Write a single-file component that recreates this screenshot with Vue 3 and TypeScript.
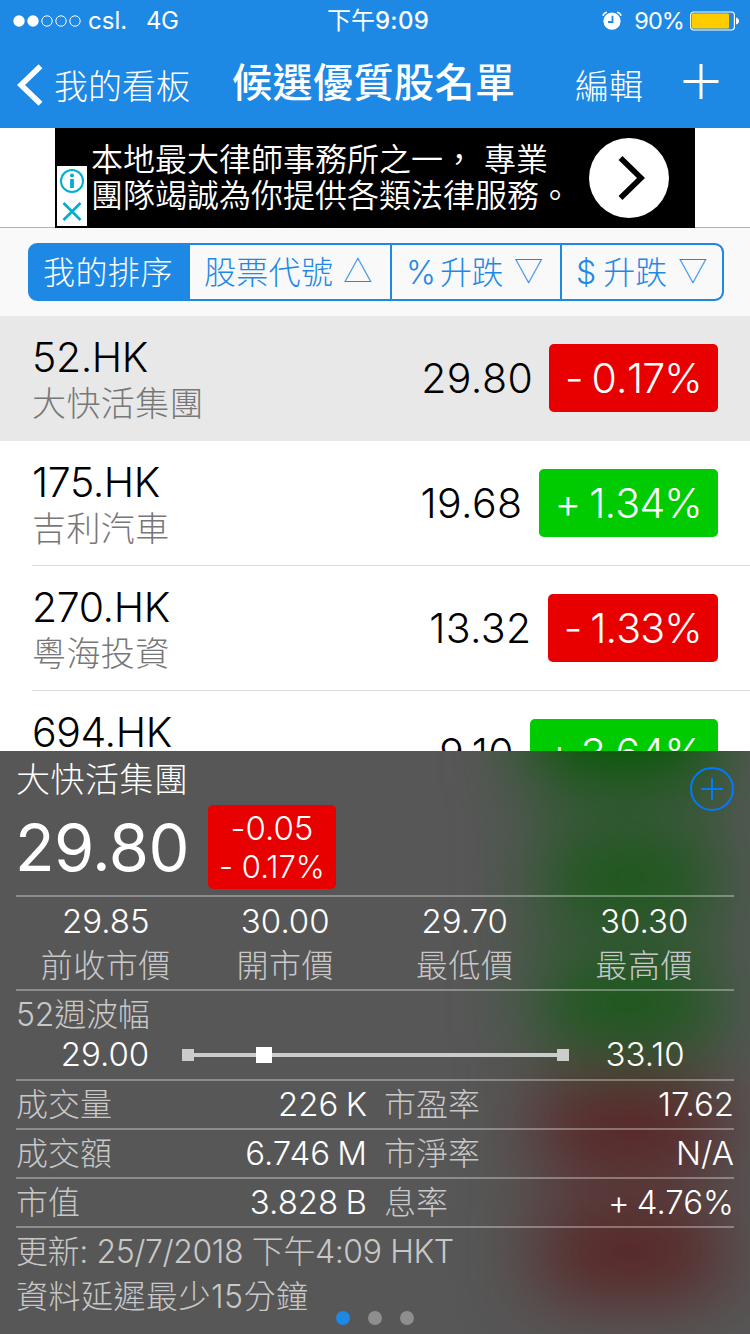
<script setup lang="ts">
interface Quote {
  code: string
  name: string
  price: string
  change: string
  up: boolean
  selected?: boolean
}

interface Pair {
  label: string
  value: string
}

const segments: { text: string; arrow?: string; cls: string }[] = [
  { text: '我的排序', cls: 'seg-a active' },
  { text: '股票代號', arrow: '△', cls: 'seg-b' },
  { text: '% 升跌', arrow: '▽', cls: 'seg-c' },
  { text: '$ 升跌', arrow: '▽', cls: 'seg-d' },
]

const quotes: Quote[] = [
  { code: '52.HK', name: '大快活集團', price: '29.80', change: '- 0.17%', up: false, selected: true },
  { code: '175.HK', name: '吉利汽車', price: '19.68', change: '+ 1.34%', up: true },
  { code: '270.HK', name: '粵海投資', price: '13.32', change: '- 1.33%', up: false },
  { code: '694.HK', name: '', price: '9.10', change: '+ 3.64%', up: true },
]

const stats: Pair[] = [
  { value: '29.85', label: '前收市價' },
  { value: '30.00', label: '開市價' },
  { value: '29.70', label: '最低價' },
  { value: '30.30', label: '最高價' },
]

const details: [Pair, Pair][] = [
  [{ label: '成交量', value: '226 K' }, { label: '市盈率', value: '17.62' }],
  [{ label: '成交額', value: '6.746 M' }, { label: '市淨率', value: 'N/A' }],
  [{ label: '市值', value: '3.828 B' }, { label: '息率', value: '+ 4.76%' }],
]

const range = { low: 29.0, high: 33.1, current: 29.8 }
const rangePct = ((range.current - range.low) / (range.high - range.low)) * 100
</script>

<template>
  <div class="screen">
    <header class="top">
      <div class="status">
        <div class="status-left">
          <svg class="signal" width="68" height="12" viewBox="0 0 68 12">
            <circle cx="6" cy="6" r="5.7" fill="#fff" />
            <circle cx="20" cy="6" r="5.7" fill="#fff" />
            <g fill="none" stroke="#fff" stroke-width="1">
              <circle cx="34" cy="6" r="5.2" />
              <circle cx="48" cy="6" r="5.2" />
              <circle cx="62" cy="6" r="5.2" />
            </g>
          </svg>
          <span class="carrier">csl.</span>
          <span class="network">4G</span>
        </div>
        <div class="clock">下午<b>9:09</b></div>
        <div class="status-right">
          <svg class="alarm" width="20" height="20" viewBox="0 0 20 20">
            <circle cx="10" cy="10.2" r="8.6" fill="#fff" />
            <path d="M1 4.8Q1.5 1.8 5 1.2M19 4.8Q18.5 1.8 15 1.2" fill="none" stroke="#fff" stroke-width="1.6" />
            <path d="M10.5 4.8V11H6" fill="none" stroke="#1e88e5" stroke-width="1.8" />
          </svg>
          <span class="percent">90%</span>
          <svg class="battery" width="50" height="20" viewBox="0 0 50 20">
            <rect x="0.6" y="1" width="43.8" height="18" rx="3" fill="none" stroke="#fff" stroke-width="1.2" />
            <rect x="2" y="2.5" width="37" height="15" rx="1" fill="#ffcc00" />
            <path d="M46 6.5Q49 7.5 49 10T46 13.5Z" fill="#fff" />
          </svg>
        </div>
      </div>
      <nav class="nav">
        <svg class="back" width="26" height="42" viewBox="0 0 26 42">
          <path d="M23.5 2.2L4 21L23.5 39.8" fill="none" stroke="#fff" stroke-width="5.6" />
        </svg>
        <span class="back-label">我的看板</span>
        <h1 class="title">候選優質股名單</h1>
        <span class="edit">編輯</span>
        <svg class="add" width="36" height="36" viewBox="0 0 36 36">
          <path d="M0.5 17.5H35.5M18 0V35" stroke="#fff" stroke-width="3" />
        </svg>
      </nav>
    </header>

    <section class="ad-strip">
      <div class="ad">
        <div class="ad-marks">
          <svg width="30" height="60" viewBox="0 0 30 60" fill="none" stroke="#00aecd">
            <circle cx="15" cy="15" r="11" stroke-width="2" />
            <path d="M15 13V22" stroke-width="3.8" />
            <circle cx="15" cy="9.5" r="2" fill="#00aecd" stroke="none" />
            <path d="M6.5 37L23.5 54M23.5 37L6.5 54" stroke-width="2.6" />
          </svg>
        </div>
        <div class="ad-copy">
          <div>本地最大律師事務所之一， 專業</div>
          <div>團隊竭誠為你提供各類法律服務。</div>
        </div>
        <svg class="ad-go" width="80" height="80" viewBox="0 0 80 80">
          <circle cx="40" cy="40" r="40" fill="#fff" />
          <path d="M31.5 20L52 40L31.5 60" fill="none" stroke="#000" stroke-width="5.6" />
        </svg>
      </div>
    </section>

    <section class="sort-bar">
      <div class="segments">
        <div v-for="s in segments" :key="s.text" class="segment" :class="s.cls">
          <span>{{ s.text }}</span><span v-if="s.arrow" class="arrow">{{ s.arrow }}</span>
        </div>
      </div>
    </section>

    <main class="list">
      <div v-for="q in quotes" :key="q.code" class="row" :class="{ selected: q.selected }">
        <div class="row-inner">
          <div class="ident">
            <div class="code">{{ q.code }}</div>
            <div class="name">{{ q.name }}</div>
          </div>
          <div class="price">{{ q.price }}</div>
          <div class="badge" :class="q.up ? 'up' : 'down'">{{ q.change }}</div>
        </div>
      </div>
    </main>

    <section class="panel">
      <div class="glow">
        <i class="g w1"></i><i class="g w2"></i><i class="g w3"></i>
        <i class="r w2"></i><i class="r w2"></i>
      </div>
      <div class="content">
        <div class="head">
          <div class="head-left">
            <div class="p-name">大快活集團</div>
            <div class="p-quote">
              <div class="p-price">29.80</div>
              <div class="p-badge">
                <div class="diff">-0.05</div>
                <div class="pct">- 0.17%</div>
              </div>
            </div>
          </div>
          <svg class="p-add" width="44" height="44" viewBox="0 0 44 44" fill="none" stroke="#007aff" stroke-width="2">
            <circle cx="22" cy="22" r="21" />
            <path d="M11 22H33M22 11V33" />
          </svg>
        </div>
        <div class="stats">
          <div v-for="s in stats" :key="s.label" class="stat">
            <div class="val">{{ s.value }}</div>
            <div class="lab">{{ s.label }}</div>
          </div>
        </div>
        <div class="range">
          <div class="lab range-title">52週波幅</div>
          <div class="range-row">
            <div class="val range-end">{{ range.low.toFixed(2) }}</div>
            <div class="track">
              <i class="stop"></i>
              <div class="bar"><i class="marker" :style="{ left: rangePct + '%' }"></i></div>
              <i class="stop"></i>
            </div>
            <div class="val range-end">{{ range.high.toFixed(2) }}</div>
          </div>
        </div>
        <div v-for="(d, i) in details" :key="i" class="detail">
          <div v-for="p in d" :key="p.label" class="pair">
            <span class="lab">{{ p.label }}</span>
            <span class="val">{{ p.value }}</span>
          </div>
        </div>
        <div class="foot">
          <div class="updated">更新: 25/7/2018 下午4:09 HKT</div>
          <div class="delay">資料延遲最少15分鐘</div>
        </div>
      </div>
      <div class="dots"><i class="on"></i><i></i><i></i></div>
    </section>
  </div>
</template>

<style>
body {
  background: #fff;
}
</style>

<style scoped>
.screen {
  width: 750px;
  height: 1334px;
  overflow: hidden;
  display: flex;
  flex-direction: column;
  font-family: Inter, 'Noto Sans CJK TC', sans-serif;
  font-weight: 300;
  font-feature-settings: 'calt' 0;
  color: #000;
  background: #fff;
  white-space: nowrap;
}
.screen svg {
  display: block;
  flex: none;
}
.top {
  height: 128px;
  flex: none;
  background: #1e88e5;
  color: #fff;
}
.status {
  height: 41px;
  display: grid;
  grid-template-columns: 1fr auto 1fr;
  align-items: center;
  font-size: 24px;
  line-height: 42px;
  font-weight: 400;
}
.status-left {
  display: flex;
  align-items: center;
  padding-left: 13px;
}
.carrier {
  margin-left: 7px;
}
.network {
  margin-left: 19px;
  letter-spacing: -0.5px;
}
.clock {
  padding-left: 6px;
}
.clock b {
  font-weight: 500;
  letter-spacing: 0.3px;
}
.status-right {
  display: flex;
  align-items: center;
  justify-content: flex-end;
  padding-right: 10px;
}
.percent {
  margin: 0 6px 0 12px;
  font-size: 23.5px;
  letter-spacing: -0.9px;
}
.nav {
  height: 87px;
  display: flex;
  align-items: center;
  padding-left: 17px;
}
.back-label {
  margin-left: 11px;
  width: 178px;
  font-size: 34px;
}
.title {
  margin: 0;
  width: 343px;
  font-size: 40px;
  letter-spacing: 0.5px;
  line-height: 84px;
  height: 87px;
  font-weight: 500;
}
.edit {
  width: 108px;
  font-size: 34px;
}
.add {
  position: relative;
  top: -3px;
}
.ad-strip {
  height: 100px;
  flex: none;
  display: flex;
  justify-content: center;
  background: linear-gradient(#fff 99px, #b2b2b2 99px);
}
.ad {
  width: 640px;
  height: 100px;
  background: #000;
  color: #fff;
  display: flex;
  align-items: center;
}
.ad-marks {
  align-self: flex-end;
  margin: 0 0 2px 2px;
  background: #fff;
}
.ad-copy {
  margin-left: 4px;
  width: 498px;
  font-size: 32px;
  line-height: 36px;
  font-weight: 350;
}
.sort-bar {
  height: 88px;
  flex: none;
  box-sizing: border-box;
  padding: 15px 26px 0 28px;
  background: #f9f9f9;
}
.segments {
  height: 58px;
  box-sizing: border-box;
  display: flex;
  border: 2px solid #1e88e5;
  border-radius: 9px;
  overflow: hidden;
  background: #1e88e5;
  color: #1e88e5;
  font-size: 32px;
  line-height: 56px;
}
.segment {
  box-sizing: border-box;
  display: flex;
  align-items: flex-start;
  background: #f9f9f9;
}
.segment + .segment {
  border-left: 2px solid #1e88e5;
}
.segment.active {
  background: #1e88e5;
  color: #fff;
}
.seg-a { width: 158px; padding-left: 13px; letter-spacing: 0.5px; }
.seg-b { width: 202px; padding-left: 14px; letter-spacing: 0.3px; }
.seg-c { width: 170px; padding-left: 14px; word-spacing: -4px; }
.seg-d { width: 162px; padding-left: 14px; word-spacing: -2px; border-radius: 0 7px 7px 0; }
.seg-c span:first-child { letter-spacing: -0.5px; }
.arrow {
  margin-left: 10px;
  font-family: 'Noto Sans CJK TC', sans-serif;
  font-size: 29px;
  line-height: 48px;
}
.seg-c .arrow,
.seg-d .arrow {
  margin-left: 11px;
}
.list {
  height: 435px;
  flex: none;
  overflow: hidden;
}
.row {
  height: 125px;
  padding-left: 32px;
}
.row.selected {
  background: #e8e8e8;
}
.row-inner {
  height: 125px;
  box-sizing: border-box;
  border-bottom: 1px solid #dcdcdc;
  padding-right: 32px;
  display: flex;
  align-items: center;
}
.selected .row-inner {
  border-color: transparent;
}
.ident {
  flex: 1;
  height: 94px;
}
.code {
  font-size: 41px;
  line-height: 52px;
  letter-spacing: -0.4px;
}
.name {
  height: 40px;
  font-size: 34px;
  line-height: 42px;
  letter-spacing: 0.4px;
  color: #777;
}
.price {
  font-size: 41px;
  letter-spacing: 0.4px;
}
.badge {
  margin-left: 16px;
  height: 68px;
  line-height: 68px;
  padding: 0 16px;
  border-radius: 5px;
  font-size: 41px;
  font-kerning: none;
  letter-spacing: -0.8px;
  word-spacing: -2px;
  color: #fff;
}
.up { background: #00cb00; }
.down { background: #e80000; }
.panel {
  position: relative;
  height: 583px;
  flex: none;
  overflow: hidden;
  background: #575757;
  color: #fff;
}
.glow {
  position: absolute;
  top: -32px;
  right: 32px;
  display: flex;
  flex-direction: column;
  align-items: flex-end;
  gap: 57px;
  filter: blur(40px);
}
.glow i {
  height: 68px;
  width: 176px;
}
.glow .w1 {
  width: 186px;
  box-shadow: 0 -60px 0 #005800;
}
.glow .w3 { width: 178px; }
.glow .g { background: #025902; }
.glow .r { background: #5a1212; }
.content {
  position: relative;
  padding: 0 16px;
}
.head {
  height: 144px;
  display: flex;
  justify-content: space-between;
}
.p-add {
  margin-top: 16px;
}
.p-name {
  height: 54px;
  font-size: 34px;
  line-height: 58px;
  letter-spacing: 0.5px;
}
.p-quote {
  display: flex;
}
.p-price {
  width: 193px;
  margin-left: -1px;
  font-size: 65px;
  line-height: 86px;
  letter-spacing: -0.6px;
  font-weight: 400;
}
.p-badge {
  width: 128px;
  height: 84px;
  box-sizing: border-box;
  padding-top: 3px;
  border-radius: 5px;
  background: #e80000;
  text-align: center;
}
.diff {
  font-size: 33px;
  line-height: 40px;
}
.pct {
  font-size: 31px;
  line-height: 38px;
}
.val {
  font-size: 33px;
}
.lab {
  font-size: 32px;
  color: #c8c8c8;
}
.stats,
.range,
.detail,
.foot {
  border-top: 2px solid rgba(255, 255, 255, 0.32);
}
.stats {
  height: 92px;
  display: grid;
  grid-template-columns: repeat(4, 1fr);
  text-align: center;
}
.stat .val {
  line-height: 48px;
}
.stat .lab {
  line-height: 42px;
  letter-spacing: 0.5px;
}
.range {
  height: 88px;
}
.range-title {
  height: 46px;
  line-height: 48px;
  letter-spacing: -0.2px;
}
.range-row {
  display: flex;
  align-items: center;
  line-height: 36px;
}
.range-end {
  width: 178px;
  line-height: 34px;
  text-align: center;
  position: relative;
  top: -1px;
}
.track {
  width: 387px;
  height: 36px;
  margin: 0 -13px 0 -12px;
  display: flex;
  align-items: center;
}
.stop {
  width: 12px;
  height: 12px;
  background: #ccc;
}
.bar {
  position: relative;
  flex: 1;
  height: 4px;
  background: #ccc;
}
.marker {
  position: absolute;
  top: -6px;
  width: 16px;
  height: 16px;
  margin-left: -9px;
  background: #fff;
}
.detail {
  height: 47px;
  display: grid;
  grid-template-columns: 351px 350px;
  column-gap: 17px;
  line-height: 47px;
}
.detail .val {
  word-spacing: -2px;
}
.pair {
  display: flex;
  justify-content: space-between;
}
.foot {
  font-size: 32px;
  line-height: 45px;
  padding-top: 1px;
  color: #c8c8c8;
}
.updated {
  letter-spacing: -0.4px;
}
.delay {
  letter-spacing: 0.5px;
}
.dots {
  position: absolute;
  left: 336px;
  bottom: 9px;
  display: flex;
  gap: 18px;
}
.dots i {
  width: 14px;
  height: 14px;
  border-radius: 50%;
  background: #8e8e8e;
}
.dots .on {
  background: #1e88e5;
}
</style>
